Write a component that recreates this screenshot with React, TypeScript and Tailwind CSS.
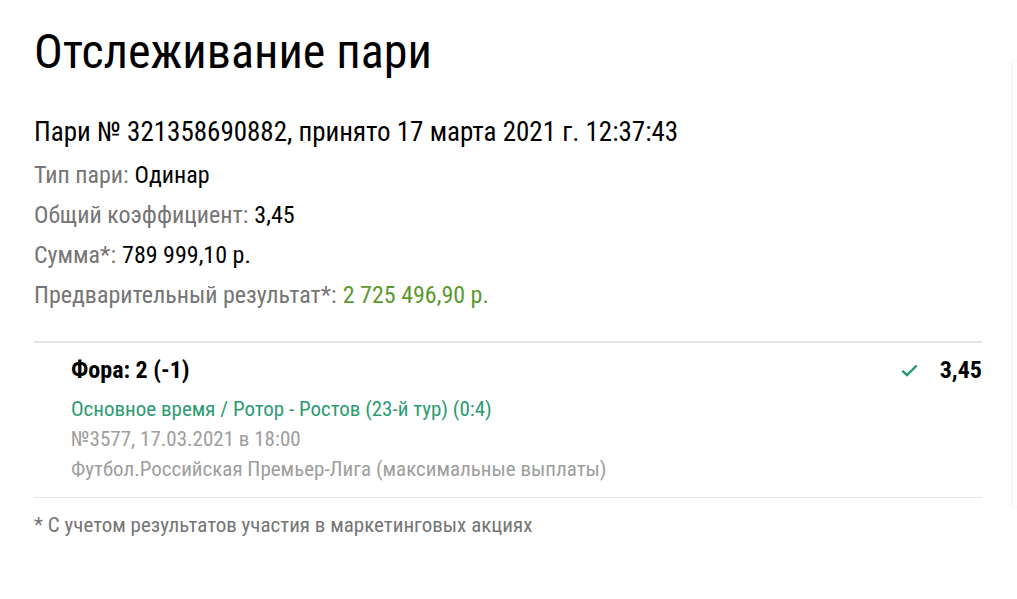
import React from 'react';

const font = { fontFamily: '"Roboto Condensed", "Liberation Sans Narrow", Roboto, sans-serif' };

const Row = ({ label, children }: { label: string; children: React.ReactNode }) => (
    <div className="h-10 flex items-center text-[24px] leading-none">
        <span className="text-[#757575]">{label}</span>
        <span className="ml-[6px]">{children}</span>
    </div>
);

const App = () => {
    return (
        <div className="w-full h-[599px] bg-white flex overflow-hidden" style={font}>
            <div className="w-[1013px] shrink-0 pl-[34px] pr-[31px]">
                <h1 className="pt-[26px] text-[48px] leading-[52px] text-black">Отслеживание пари</h1>

                <div className="mt-[40px] text-[27px] leading-[28px] text-black">
                    Пари № 321358690882, принято 17 марта 2021 г. 12:37:43
                </div>

                <div className="mt-[9px] text-black">
                    <Row label="Тип пари:">Одинар</Row>
                    <Row label="Общий коэффициент:">3,45</Row>
                    <Row label="Сумма*:">789 999,10 р.</Row>
                    <Row label="Предварительный результат*:">
                        <span className="text-[#5b9a2e]">2 725 496,90 р.</span>
                    </Row>
                </div>

                {/* Bet item */}
                <div className="mt-[26px] border-t-2 border-b border-[#e4e4e4] pl-[37px] pt-[12px] pb-[13px]">
                    <div className="flex items-center justify-between h-[30px]">
                        <span className="text-[24px] leading-none font-bold text-black">Фора: 2 (-1)</span>
                        <div className="flex items-center gap-[22px]">
                            <svg width="17" height="13" viewBox="0 0 17 13" fill="none">
                                <path d="M1.3 6.8 L6 11 L15.7 1.5" stroke="#1f9a6a" strokeWidth="2.4" />
                            </svg>
                            <span className="text-[24px] leading-none font-bold text-black">3,45</span>
                        </div>
                    </div>
                    <div className="mt-[9px] text-[21px] leading-[30px]">
                        <div className="text-[#2d9b72]">Основное время / Ротор - Ростов (23-й тур) (0:4)</div>
                        <div className="text-[#9e9e9e]">№3577, 17.03.2021 в 18:00</div>
                        <div className="text-[#9e9e9e]">Футбол.Российская Премьер-Лига (максимальные выплаты)</div>
                    </div>
                </div>

                <div className="mt-[14px] text-[21px] leading-[26px] text-[#757575]">* С учетом результатов участия в маркетинговых акциях</div>
            </div>
            <div className="mt-[62px] h-[444px] w-[20px] bg-white shadow-[0_0_6px_rgba(0,0,0,0.12)]" />
        </div>
    );
};

export default App;
